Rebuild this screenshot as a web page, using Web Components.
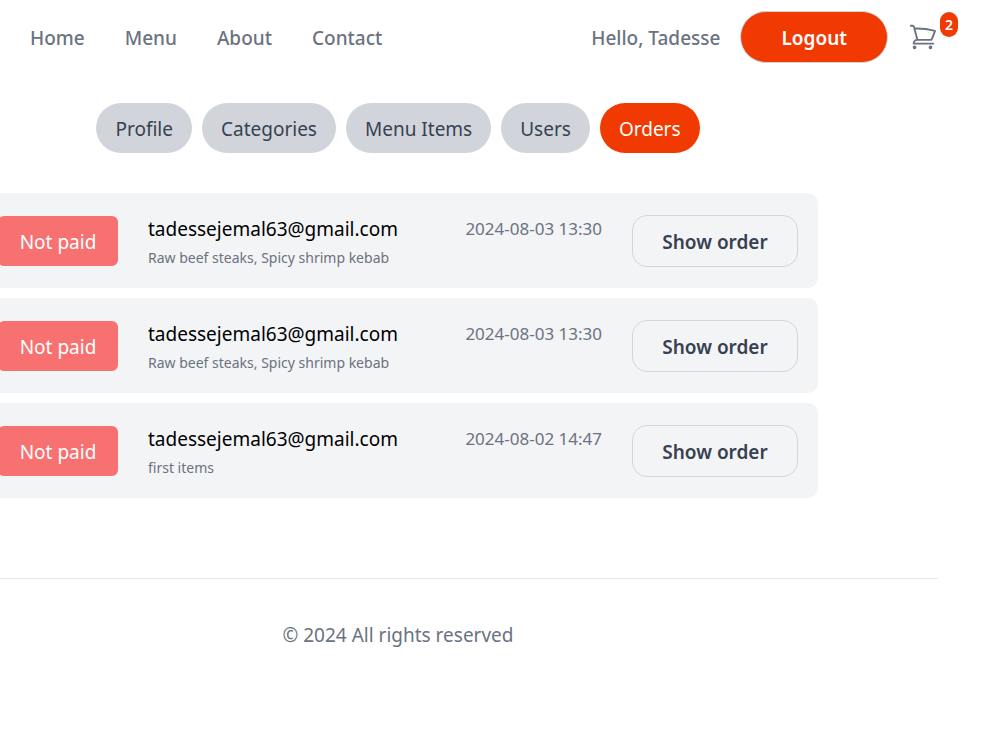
<!DOCTYPE html>
<html lang="en">
<head>
<meta charset="utf-8">
<meta name="viewport" content="width=device-width, initial-scale=1">
<title>Orders</title>
<style>
  body {
    margin: 0;
    background: #fff;
    color: #000;
    font: 19px/30px "Segoe UI", "Noto Sans", sans-serif;
    --accent: #f13a01;
    --muted: #6b7280;
    --line: #d1d5db;
    --ink: #374151;
  }
</style>
</head>
<body>
<order-page></order-page>

<script>
const define = (name, html, setup) => {
  const template = document.createElement('template');
  template.innerHTML = html;
  customElements.define(name, class extends HTMLElement {
    constructor() {
      super();
      this.attachShadow({ mode: 'open' }).append(template.content.cloneNode(true));
    }
    connectedCallback() {
      if (setup) setup(this, this.shadowRoot);
    }
  });
};

define('cart-link', `
  <style>
    :host { display: block; }
    a { display: block; position: relative; color: var(--muted); }
    svg { display: block; width: 30px; height: 30px; }
    span {
      position: absolute; top: -10px; right: -20px;
      padding: 5px; border-radius: 9px;
      background: var(--accent); color: #fff;
      font-size: 14px; line-height: 15px; font-weight: 600;
    }
  </style>
  <a href="#cart" aria-label="Cart">
    <svg viewBox="0 0 24 24" fill="none" stroke="currentColor" stroke-width="1.5" stroke-linecap="round" stroke-linejoin="round" aria-hidden="true">
      <path d="M2.25 3h1.386c.51 0 .955.343 1.087.835l.383 1.437M7.5 14.25a3 3 0 0 0-3 3h15.75m-12.75-3h11.218c1.121-2.3 2.1-4.684 2.924-7.138a60.114 60.114 0 0 0-16.536-1.84M7.5 14.25 5.106 5.272M6 20.25a.75.75 0 1 1-1.5 0 .75.75 0 0 1 1.5 0Zm12.75 0a.75.75 0 1 1-1.5 0 .75.75 0 0 1 1.5 0Z"/>
    </svg>
    <span><slot></slot></span>
  </a>`);

define('site-header', `
  <style>
    :host { display: block; }
    header {
      display: flex; align-items: center; justify-content: space-between;
      color: var(--muted); font-weight: 500;
    }
    nav { display: flex; align-items: center; gap: 40px; }
    .account { gap: 20px; }
    a { color: inherit; text-decoration: none; }
    nav > a { padding-top: 2px; }
    button {
      font: inherit; font-weight: 600; color: #fff; background: var(--accent);
      border: 1px solid var(--line); border-radius: 26px;
      padding: 11px 40px 9px; cursor: pointer;
    }
  </style>
  <header>
    <nav aria-label="Main">
      <a href="#home">Home</a>
      <a href="#menu">Menu</a>
      <a href="#about">About</a>
      <a href="#contact">Contact</a>
    </nav>
    <nav class="account" aria-label="Account">
      <a href="#profile">Hello, Tadesse</a>
      <button type="button">Logout</button>
      <cart-link>2</cart-link>
    </nav>
  </header>`);

define('tab-link', `
  <style>
    :host { display: block; }
    a {
      display: block; padding: 11px 19px 9px; border-radius: 25px;
      background: var(--line); color: var(--ink); text-decoration: none;
    }
    :host([active]) a { background: var(--accent); color: #fff; }
  </style>
  <a href="#tab"><slot></slot></a>`,
  (host, root) => {
    if (host.hasAttribute('active')) root.querySelector('a').setAttribute('aria-current', 'page');
  });

define('tab-bar', `
  <style>
    :host { display: block; }
    nav { display: flex; justify-content: center; gap: 10px; }
  </style>
  <nav aria-label="Dashboard"><slot></slot></nav>`);

define('order-row', `
  <style>
    :host {
      display: flex; align-items: center; gap: 30px;
      padding: 20px; border-radius: 10px; background: #f3f4f6;
    }
    .status {
      flex: none; box-sizing: border-box; width: 120px; padding: 11px 0 9px;
      border-radius: 6px; background: #f87171; color: #fff; text-align: center;
    }
    .info { flex: 1; min-width: 0; }
    .top { display: flex; justify-content: space-between; gap: 10px; padding-top: 1px; }
    time { font-size: 17px; color: var(--muted); }
    .items { margin-top: 4px; font-size: 14px; line-height: 20px; color: var(--muted); }
    button {
      flex: none; width: 166px; padding: 11px 0 9px;
      font: inherit; font-weight: 600; color: var(--ink);
      background: transparent; border: 1px solid var(--line); border-radius: 15px;
      cursor: pointer;
    }
  </style>
  <div class="status">Not paid</div>
  <div class="info">
    <div class="top"><span><slot name="email"></slot></span><time><slot name="time"></slot></time></div>
    <div class="items"><slot></slot></div>
  </div>
  <button type="button">Show order</button>`);

define('site-footer', `
  <style>
    :host { display: block; }
    footer {
      border-top: 1px solid #e5e7eb; padding: 41px 40px 40px;
      text-align: center; color: var(--muted);
    }
  </style>
  <footer><slot></slot></footer>`);

define('order-page', `
  <style>
    :host { display: block; overflow-x: clip; }
    site-header { padding: 11px 62px 0 30px; }
    /* The content column is wider than the window and runs past its left edge. */
    .content { margin: 40px 62px 0 -142px; }
    section {
      display: grid; gap: 10px; max-width: 840px; margin: 40px auto 80px;
    }
  </style>
  <site-header></site-header>
  <div class="content">
    <main>
      <tab-bar>
        <tab-link>Profile</tab-link>
        <tab-link>Categories</tab-link>
        <tab-link>Menu Items</tab-link>
        <tab-link>Users</tab-link>
        <tab-link active>Orders</tab-link>
      </tab-bar>
      <section aria-label="Orders">
        <order-row><span slot="email">tadessejemal63@gmail.com</span><span slot="time">2024-08-03 13:30</span>Raw beef steaks, Spicy shrimp kebab</order-row>
        <order-row><span slot="email">tadessejemal63@gmail.com</span><span slot="time">2024-08-03 13:30</span>Raw beef steaks, Spicy shrimp kebab</order-row>
        <order-row><span slot="email">tadessejemal63@gmail.com</span><span slot="time">2024-08-02 14:47</span>first items</order-row>
      </section>
    </main>
    <site-footer>© 2024 All rights reserved</site-footer>
  </div>`);
</script>
</body>
</html>
